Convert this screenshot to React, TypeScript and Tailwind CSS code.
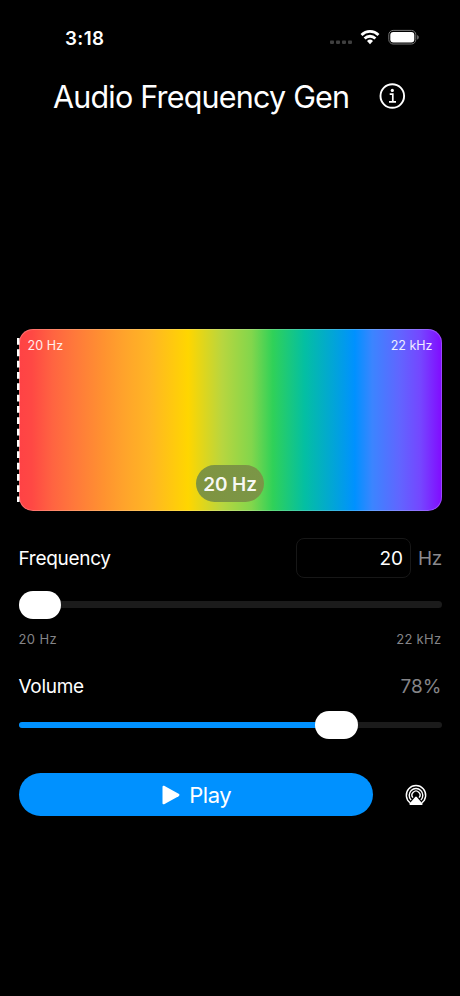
import React from "react";

const gradient =
  "bg-[linear-gradient(90deg,#ff4245_0%,#ff4844_3%,#ff6441_8%,#ff783b_13%,#ff9230_20%,#ffa42b_25%,#ffb624_31%,#ffd600_40%,#b8d63f_48%,#82d64c_55%,#30d158_60%,#04bfa2_67.5%,#0091ff_79.4%,#3b85ff_83.5%,#6165ff_90%,#7546ff_95%,#8010ff_99.5%)]";

function StatusBar() {
  return (
    <header className="flex h-[54px] items-start pt-[26px] pl-[65px]">
      <span className="w-[265px] pt-px text-[18.8px] leading-[23px] font-semibold tracking-[0.4px]">3:18</span>
      <svg width="90" height="20" viewBox="0 0 90 20" fill="none">
        <g fill="#3f3f3f">
          <rect x="0" y="14.5" width="4" height="3.4" rx="0.8" />
          <rect x="6" y="14.5" width="4" height="3.4" rx="0.8" />
          <rect x="12" y="14.5" width="4" height="3.4" rx="0.8" />
          <rect x="18" y="14.5" width="4" height="3.4" rx="0.8" />
        </g>
        <g stroke="#fff" strokeWidth="2.8">
          <path d="M31.5 8.9A12.2 12.2 0 0 1 48.5 8.9" />
          <path d="M34.6 12.4A7.8 7.8 0 0 1 45.4 12.4" />
        </g>
        <path d="M37 14.9a4.4 4.4 0 0 1 6 0L40 18.2Z" fill="#fff" />
        <rect x="58.8" y="4.4" width="27" height="13.6" rx="4.3" stroke="#777" />
        <rect x="60.3" y="5.9" width="24" height="10.6" rx="3" fill="#fff" />
        <path d="M87.2 8.9c2 .8 2 3.8 0 4.6Z" fill="#777" />
      </svg>
    </header>
  );
}

function Slider({ value }: { value: number }) {
  return (
    <div className="relative flex h-7 items-center">
      <div className="h-[6.5px] w-full overflow-hidden rounded-full bg-[#1b1b1b]">
        <div className="h-full bg-[#0091ff]" style={{ width: `${value}%` }} />
      </div>
      <div
        className="absolute top-0 h-7 w-[42.5px] rounded-full bg-white"
        style={{ left: `calc((100% - 42.5px) * ${value / 100})` }}
      />
    </div>
  );
}

function Spectrum() {
  return (
    <div className={`relative flex h-[182px] flex-col items-center justify-between rounded-[14px] pt-2 pb-[9px] shadow-[inset_0_0_0_1px_rgba(255,255,255,0.22)] ${gradient}`}>
      <div className="flex w-full justify-between px-[9px] text-[12.5px] leading-[18px] text-white/90">
        <span className="tracking-[0.1px]">20 Hz</span>
        <span>22 kHz</span>
      </div>
      <span className="flex h-[37px] w-[68px] items-center justify-center rounded-full bg-[linear-gradient(90deg,#809440,#7a9647)] pt-[3px] text-[19px] font-semibold tracking-[-0.1px] whitespace-nowrap text-white/95">
        20 Hz
      </span>
      <svg className="absolute top-[9px] -left-[1.5px]" width="3" height="165" viewBox="0 0 3 165">
        <path d="M1.25 0V164" stroke="#fff" strokeWidth="2.5" strokeDasharray="6.8 4.53" />
      </svg>
    </div>
  );
}

export default function App() {
  return (
    <main className="flex h-[996px] w-[460px] flex-col overflow-hidden bg-black font-['Inter','Liberation_Sans',sans-serif] text-white">
      <StatusBar />
      <div className="flex h-[85px] items-center pl-[53px]">
        <h1 className="w-[326px] text-[30.5px] leading-9 tracking-[-0.8px] whitespace-nowrap">Audio Frequency Gen</h1>
        <svg width="27" height="27" viewBox="0 0 27 27" fill="none" stroke="#fff" strokeWidth="1.9">
          <circle cx="13.3" cy="13" r="11.8" />
          <path d="M10.7 11.2h3.1v7M10 18.8h7" strokeWidth="1.7" />
          <circle cx="13.3" cy="7.4" r="1.6" fill="#fff" stroke="none" />
        </svg>
      </div>
      <section className="flex flex-col pt-[190px] pr-[18.5px] pl-[18.5px]">
        <Spectrum />
        <div className="mt-[27px] flex h-10 items-center text-[19px] leading-6">
          <label className="flex-1 pt-[2px] tracking-[-0.3px]">Frequency</label>
          <div className="flex h-10 w-[115px] items-center justify-end rounded-[8px] border border-[#171717] pt-[2px] pr-[7px]">20</div>
          <span className="w-[30.5px] pt-[2px] pl-[7px] tracking-[-0.4px] text-[#8a8a8e]">Hz</span>
        </div>
        <div className="mt-[12.5px]">
          <Slider value={0} />
        </div>
        <div className="mt-[11.5px] flex justify-between text-[13px] leading-[18px] text-[#858588]">
          <span className="tracking-[0.4px]">20 Hz</span>
          <span className="tracking-[0.3px]">22 kHz</span>
        </div>
        <div className="mt-[27px] flex justify-between text-[19px] leading-6">
          <label className="tracking-[-0.3px]">Volume</label>
          <span className="text-[#858588]">78%</span>
        </div>
        <div className="mt-3">
          <Slider value={78} />
        </div>
        <div className="mt-[34px] flex items-center">
          <button className="flex h-[43px] w-[354.5px] items-center justify-center rounded-full bg-[#0091ff] pt-px text-[22px] tracking-[-0.4px]">
            <svg className="ml-0.5" width="18" height="20" viewBox="0 0 18 20" fill="#fff">
              <path d="M.5 2.1C.5.7 1.5.3 2.6.9L16.6 8.8c1.2.7 1.2 1.7 0 2.4L2.6 19.1C1.5 19.7.5 19.3.5 17.9Z" />
            </svg>
            <span className="ml-[9px]">Play</span>
          </button>
          <svg className="ml-8" width="22" height="22" viewBox="0 0 22 22" fill="none" stroke="#fff" strokeWidth="1.4">
            <path d="M5.3 19A9.7 9.7 0 1 1 16.7 19" />
            <path d="M6.1 16A6.8 6.8 0 1 1 15.9 16" />
            <path d="M7.9 13.6A4 4 0 1 1 14.1 13.6" />
            <path d="M10.2 12.9q.8-.8 1.6 0l5.6 6.7q.8 1.4-.6 1.4H5.2q-1.4 0-.6-1.4Z" fill="#fff" stroke="none" />
          </svg>
        </div>
      </section>
    </main>
  );
}
